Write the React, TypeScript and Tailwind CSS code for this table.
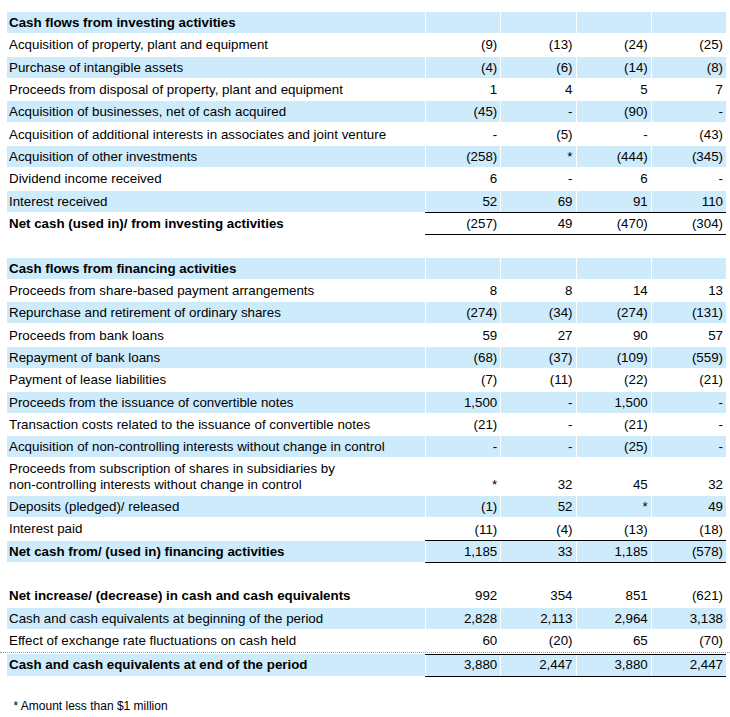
import clsx from "clsx";

type Line = {
  label?: string;
  values?: string[];
  bold?: boolean;
  shade?: boolean;
  rule?: boolean;
  tall?: boolean;
  blank?: boolean;
};

const rows: Line[] = [
  { label: "Cash flows from investing activities", bold: true, shade: true },
  { label: "Acquisition of property, plant and equipment", values: ["(9)", "(13)", "(24)", "(25)"] },
  { label: "Purchase of intangible assets", values: ["(4)", "(6)", "(14)", "(8)"], shade: true },
  { label: "Proceeds from disposal of property, plant and equipment", values: ["1", "4", "5", "7"] },
  { label: "Acquisition of businesses, net of cash acquired", values: ["(45)", "-", "(90)", "-"], shade: true },
  { label: "Acquisition of additional interests in associates and joint venture", values: ["-", "(5)", "-", "(43)"] },
  { label: "Acquisition of other investments", values: ["(258)", "*", "(444)", "(345)"], shade: true },
  { label: "Dividend income received", values: ["6", "-", "6", "-"] },
  { label: "Interest received", values: ["52", "69", "91", "110"], shade: true, rule: true },
  { label: "Net cash (used in)/ from investing activities", values: ["(257)", "49", "(470)", "(304)"], bold: true, rule: true },
  { blank: true },
  { label: "Cash flows from financing activities", bold: true, shade: true },
  { label: "Proceeds from share-based payment arrangements", values: ["8", "8", "14", "13"] },
  { label: "Repurchase and retirement of ordinary shares", values: ["(274)", "(34)", "(274)", "(131)"], shade: true },
  { label: "Proceeds from bank loans", values: ["59", "27", "90", "57"] },
  { label: "Repayment of bank loans", values: ["(68)", "(37)", "(109)", "(559)"], shade: true },
  { label: "Payment of lease liabilities", values: ["(7)", "(11)", "(22)", "(21)"] },
  { label: "Proceeds from the issuance of convertible notes", values: ["1,500", "-", "1,500", "-"], shade: true },
  { label: "Transaction costs related to the issuance of convertible notes", values: ["(21)", "-", "(21)", "-"] },
  { label: "Acquisition of non-controlling interests without change in control", values: ["-", "-", "(25)", "-"], shade: true },
  { label: "Proceeds from subscription of shares in subsidiaries by", values: ["*", "32", "45", "32"], tall: true },
  { label: "Deposits (pledged)/ released", values: ["(1)", "52", "*", "49"], shade: true },
  { label: "Interest paid", values: ["(11)", "(4)", "(13)", "(18)"], rule: true },
  { label: "Net cash from/ (used in) financing activities", values: ["1,185", "33", "1,185", "(578)"], bold: true, shade: true, rule: true },
  { blank: true },
  { label: "Net increase/ (decrease) in cash and cash equivalents", values: ["992", "354", "851", "(621)"], bold: true },
  { label: "Cash and cash equivalents at beginning of the period", values: ["2,828", "2,113", "2,964", "3,138"], shade: true },
];

const Row = ({ line }: { line: Line }) => {
  if (line.blank) return <div className="h-[22.33px]" />;
  const vals = line.values ?? ["", "", "", ""];
  return (
    <div className={clsx("flex", line.tall ? "h-[37.5px]" : "h-[22.33px]")}>
      <div className="w-[418px] pb-[1.33px]">
        <div
          className={clsx(
            "h-full flex items-center pl-[2px] pt-[1px] leading-[16px]",
            line.shade && "bg-[#cdebfb]",
            line.bold && "font-bold"
          )}
        >
          {line.tall ? (
            <span>
              {line.label}
              <br />
              non-controlling interests without change in control
            </span>
          ) : (
            line.label
          )}
        </div>
      </div>
      <div className={clsx("flex h-full", line.rule ? "border-b border-black" : "pb-[1.33px]")}>
        {vals.map((v, i) => (
          <div key={i} className="w-[75.25px] pl-[1px] h-full">
            <div
              className={clsx(
                "h-full flex justify-end pr-[3px]",
                line.tall ? "items-end pb-[2px] leading-[16px]" : "items-center pt-[1px]",
                line.shade && "bg-[#cdebfb]"
              )}
            >
              {v}
            </div>
          </div>
        ))}
      </div>
    </div>
  );
};

export default function App() {
  const effect = ["60", "(20)", "65", "(70)"];
  const closing = ["3,880", "2,447", "3,880", "2,447"];

  return (
    <div className="w-[730px] h-[717px] bg-white pt-[12px] pl-[7px] text-black text-[13.33px] font-['Liberation_Sans',Arial,sans-serif]">
      {rows.map((line, idx) => (
        <Row key={idx} line={line} />
      ))}

      {/* effect row carries the dotted rule across the whole page */}
      <div className="-ml-[7px] pl-[7px] w-[730px] border-b border-dotted border-[#9a9a9a]">
        <div className="flex h-[21.5px]">
          <div className="w-[418px] flex items-center pl-[2px] pt-[1px]">
            Effect of exchange rate fluctuations on cash held
          </div>
          {effect.map((v, i) => (
            <div key={i} className="w-[75.25px] pl-[1px] flex items-center justify-end pr-[3px] pt-[1px]">
              {v}
            </div>
          ))}
        </div>
      </div>

      <div className="flex h-[23px] mt-[1px]">
        <div className="w-[418px] pb-[1px]">
          <div className="h-full bg-[#cdebfb] flex items-center pl-[2px] pt-[1px] font-bold">
            Cash and cash equivalents at end of the period
          </div>
        </div>
        <div className="flex h-full border-t border-b border-black">
          {closing.map((v, i) => (
            <div key={i} className="w-[75.25px] pl-[1px] h-full">
              <div className="h-full bg-[#cdebfb] flex items-center justify-end pr-[3px]">{v}</div>
            </div>
          ))}
        </div>
      </div>

      <p className="mt-[22px] pl-[6.5px] text-[12px] leading-[14px]">* Amount less than $1 million</p>
    </div>
  );
}
